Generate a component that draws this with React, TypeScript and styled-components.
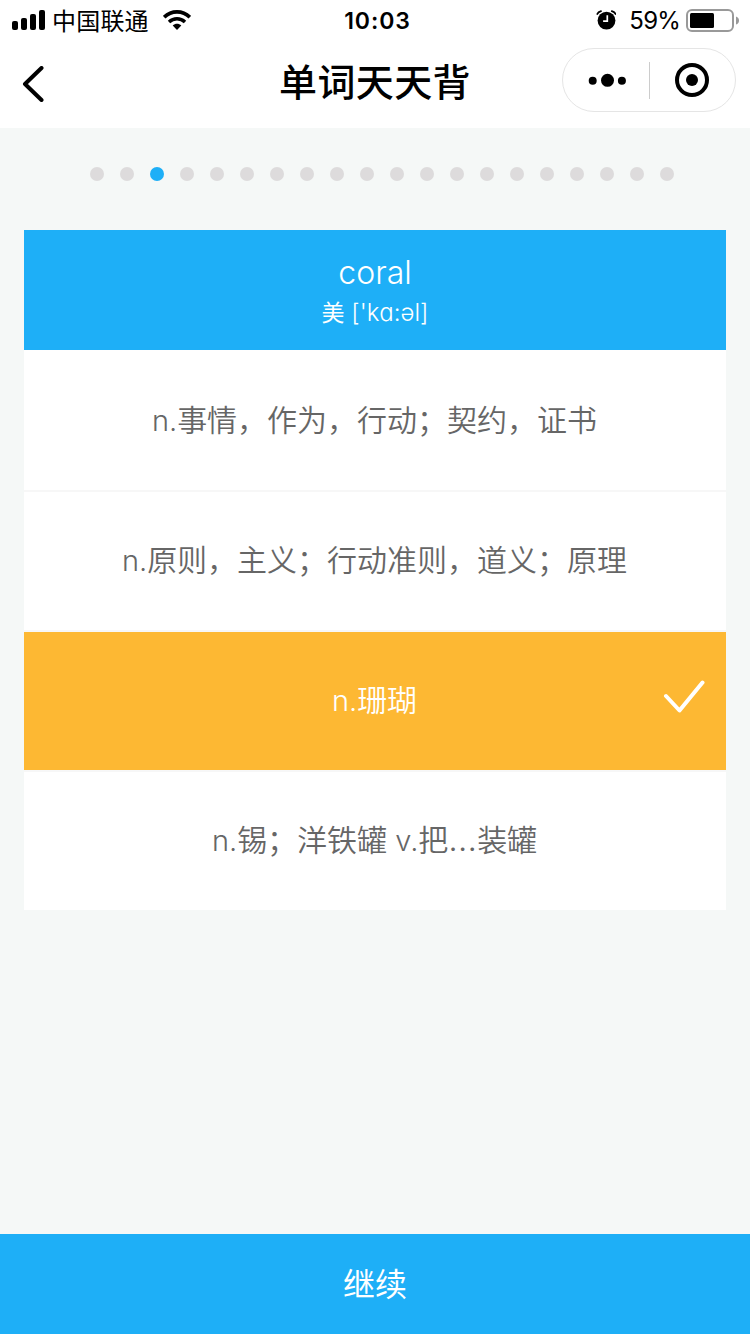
import React from "react";
import styled, { createGlobalStyle } from "styled-components";

const GlobalStyle = createGlobalStyle`
  * { box-sizing: border-box; }
  body {
    margin: 0;
    background: #f5f8f7;
    font-family: Inter, "Noto Sans CJK SC", sans-serif;
    -webkit-font-smoothing: antialiased;
  }
`;

const Screen = styled.div`
  display: flex;
  flex-direction: column;
  width: 750px;
  height: 1334px;
  background: #f5f8f7;
  overflow: hidden;
`;

const Header = styled.header`
  height: 128px;
  background: #fff;
  color: #000;
`;

const StatusBar = styled.div`
  display: grid;
  grid-template-columns: 1fr auto 1fr;
  align-items: center;
  height: 40px;
  padding: 0 11px 0 12px;
`;

const StatusGroup = styled.div<{ $end?: boolean }>`
  display: flex;
  align-items: center;
  justify-content: ${(p) => (p.$end ? "flex-end" : "flex-start")};
`;

const Carrier = styled.span`
  margin: 0 14px 0 7px;
  padding-top: 3px;
  font-size: 24px;
  letter-spacing: 0.2px;
  line-height: 37px;
`;

const Clock = styled.span`
  padding: 2px 0 0 4px;
  font-size: 23px;
  font-weight: 600;
  letter-spacing: 0.9px;
  line-height: 38px;
`;

const Percent = styled.span`
  margin: 0 6px 0 13px;
  padding-top: 2px;
  font-size: 24px;
  line-height: 38px;
  letter-spacing: -0.8px;
`;

const NavBar = styled.div`
  display: grid;
  grid-template-columns: 1fr auto 1fr;
  align-items: center;
  height: 80px;
  padding: 0 14px 0 22px;
`;

const BackButton = styled.button`
  display: flex;
  padding: 7px 0 0;
  border: 0;
  background: none;
`;

const Title = styled.h1`
  margin: 0;
  padding: 4px 8px 0 0;
  font-size: 38px;
  font-weight: 500;
  letter-spacing: 0.4px;
  line-height: 76px;
`;

const Capsule = styled.div`
  display: flex;
  align-items: center;
  justify-self: end;
  width: 174px;
  height: 64px;
  border: 1px solid #e5e5e5;
  border-radius: 32px;
`;

const CapsuleButton = styled.button`
  display: flex;
  flex: 1;
  align-items: center;
  justify-content: center;
  padding: 0;
  border: 0;
  background: none;
`;

const CapsuleDivider = styled.span`
  width: 1px;
  height: 37px;
  background: #ccc;
`;

const Progress = styled.div`
  display: flex;
  gap: 16px;
  padding: 39px 0 49px 90px;
`;

const Dot = styled.span<{ $active: boolean }>`
  width: 14px;
  height: 14px;
  border-radius: 50%;
  background: ${(p) => (p.$active ? "#1eaff7" : "#dddbdc")};
`;

const Card = styled.section`
  margin: 0 24px;
  background: #fff;
`;

const WordPanel = styled.div`
  display: flex;
  flex-direction: column;
  align-items: center;
  height: 120px;
  padding-top: 21px;
  background: #1eaff7;
  color: #fff;
`;

const Word = styled.span`
  font-size: 32px;
  font-weight: 300;
  line-height: 44px;
`;

const Phonetic = styled.span`
  font-size: 24px;
  font-weight: 300;
  line-height: 36px;
`;

const Accent = styled.span`
  font-size: 23px;
  font-weight: 400;
`;

const Option = styled.div<{ $selected: boolean }>`
  display: grid;
  grid-template-columns: 1fr auto 1fr;
  align-items: center;
  height: 140px;
  padding: 0 21px 2px 20px;
  background: ${(p) => (p.$selected ? "#fdb833" : "#fff")};
  background-clip: padding-box;
  color: ${(p) => (p.$selected ? "#fff" : "#666")};
  & + & {
    padding-bottom: 4px;
    border-top: 2px solid #f7f7f7;
  }
`;

const Meaning = styled.span`
  grid-column: 2;
  font-family: "Noto Sans CJK SC", sans-serif;
  font-size: 30px;
  font-weight: 350;
  line-height: 44px;
  white-space: nowrap;
`;

const Latin = styled.span`
  font-family: Inter, sans-serif;
  font-size: 29px;
  font-weight: 350;
`;

const Ellipsis = styled(Latin)`
  font-size: 34px;
  line-height: 1;
`;

const CheckMark = styled.svg`
  justify-self: end;
  margin-bottom: 5px;
`;

const ContinueButton = styled.button`
  height: 100px;
  margin-top: auto;
  padding: 0 0 4px;
  border: 0;
  background: #1eaff7;
  color: #fff;
  font: 400 32px/96px "Noto Sans CJK SC", sans-serif;
`;

type Part = { text: string; kind?: "latin" | "ellipsis" };

const options: { parts: Part[]; selected?: boolean }[] = [
  { parts: [{ text: "n.", kind: "latin" }, { text: "事情，作为，行动；契约，证书" }] },
  { parts: [{ text: "n.", kind: "latin" }, { text: "原则，主义；行动准则，道义；原理" }] },
  { parts: [{ text: "n.", kind: "latin" }, { text: "珊瑚" }], selected: true },
  {
    parts: [
      { text: "n.", kind: "latin" },
      { text: "锡；洋铁罐" },
      { text: " v.", kind: "latin" },
      { text: "把" },
      { text: "…", kind: "ellipsis" },
      { text: "装罐" },
    ],
  },
];

const MeaningPart = ({ text, kind }: Part) => {
  if (kind === "latin") return <Latin>{text}</Latin>;
  if (kind === "ellipsis") return <Ellipsis>{text}</Ellipsis>;
  return <>{text}</>;
};

const SignalIcon = () => (
  <svg width="33" height="20" viewBox="0 0 33 20">
    <rect x="0" y="11" width="6" height="9" rx="2" />
    <rect x="9" y="8" width="6" height="12" rx="2" />
    <rect x="18" y="4" width="6" height="16" rx="2" />
    <rect x="27" y="0" width="6" height="20" rx="2" />
  </svg>
);

const WifiIcon = () => (
  <svg width="28" height="20" viewBox="0 0 28 20">
    <path d="M1.2 7.2C8.4 .1 19.6 .1 26.8 7.2" fill="none" stroke="#000" strokeWidth="3.6" />
    <path d="M6 12C10.6 7.7 17.4 7.7 22 12" fill="none" stroke="#000" strokeWidth="3.5" />
    <path d="M9.7 15.6C12.2 13.2 15.8 13.2 18.3 15.6L14 20Z" />
  </svg>
);

const AlarmIcon = () => (
  <svg width="20" height="20" viewBox="0 0 20 20">
    <circle cx="10.5" cy="10.6" r="8.9" />
    <path d="M1.3 4Q2.2 1.8 5 1.1M19.5 4Q18.6 1.8 15.8 1.1" fill="none" stroke="#000" strokeWidth="1.8" strokeLinecap="round" />
    <path d="M11.3 5.3V11.2H7.1" fill="none" stroke="#fff" strokeWidth="1.7" />
  </svg>
);

const BatteryIcon = () => (
  <svg width="53" height="24" viewBox="0 0 53 24">
    <rect x="1" y="2" width="46" height="21" rx="5" fill="none" stroke="#999" strokeWidth="2" />
    <rect x="4" y="5" width="24" height="15" rx="1.5" />
    <path d="M50 8.5Q53 9.5 53 12.5T50 16.5Z" fill="#999" />
  </svg>
);

export default function App() {
  return (
    <>
      <GlobalStyle />
      <Screen>
        <Header>
          <StatusBar>
            <StatusGroup>
              <SignalIcon />
              <Carrier>中国联通</Carrier>
              <WifiIcon />
            </StatusGroup>
            <Clock>10:03</Clock>
            <StatusGroup $end>
              <AlarmIcon />
              <Percent>59%</Percent>
              <BatteryIcon />
            </StatusGroup>
          </StatusBar>
          <NavBar>
            <BackButton aria-label="返回">
              <svg width="22" height="36" viewBox="0 0 22 36">
                <path d="M19.5 2L3 18L19.5 34" fill="none" stroke="#000" strokeWidth="4" strokeLinecap="round" strokeLinejoin="round" />
              </svg>
            </BackButton>
            <Title>单词天天背</Title>
            <Capsule>
              <CapsuleButton aria-label="更多">
                <svg width="42" height="14" viewBox="-3 0 42 14">
                  <circle cx="4.7" cy="7.8" r="4" />
                  <circle cx="19.5" cy="7.3" r="6.5" />
                  <circle cx="33.9" cy="7.8" r="4" />
                </svg>
              </CapsuleButton>
              <CapsuleDivider />
              <CapsuleButton aria-label="关闭">
                <svg width="34" height="34" viewBox="0 0 34 34">
                  <circle cx="17" cy="17" r="15" fill="none" stroke="#000" strokeWidth="4" />
                  <circle cx="17" cy="17" r="6" />
                </svg>
              </CapsuleButton>
            </Capsule>
          </NavBar>
        </Header>
        <Progress>
          {Array.from({ length: 20 }, (_, i) => (
            <Dot key={i} $active={i === 2} />
          ))}
        </Progress>
        <Card>
          <WordPanel>
            <Word>coral</Word>
            <Phonetic>
              <Accent>美</Accent> ['kɑ:əl]
            </Phonetic>
          </WordPanel>
          {options.map((option, i) => (
            <Option key={i} $selected={!!option.selected}>
              <Meaning>
                {option.parts.map((part, j) => (
                  <MeaningPart key={j} {...part} />
                ))}
              </Meaning>
              {option.selected && (
                <CheckMark width="42" height="34" viewBox="0 0 42 34">
                  <path d="M3 16L16.5 30.5L39.5 2.5" fill="none" stroke="#fff" strokeWidth="4" strokeLinecap="round" strokeLinejoin="round" />
                </CheckMark>
              )}
            </Option>
          ))}
        </Card>
        <ContinueButton>继续</ContinueButton>
      </Screen>
    </>
  );
}
